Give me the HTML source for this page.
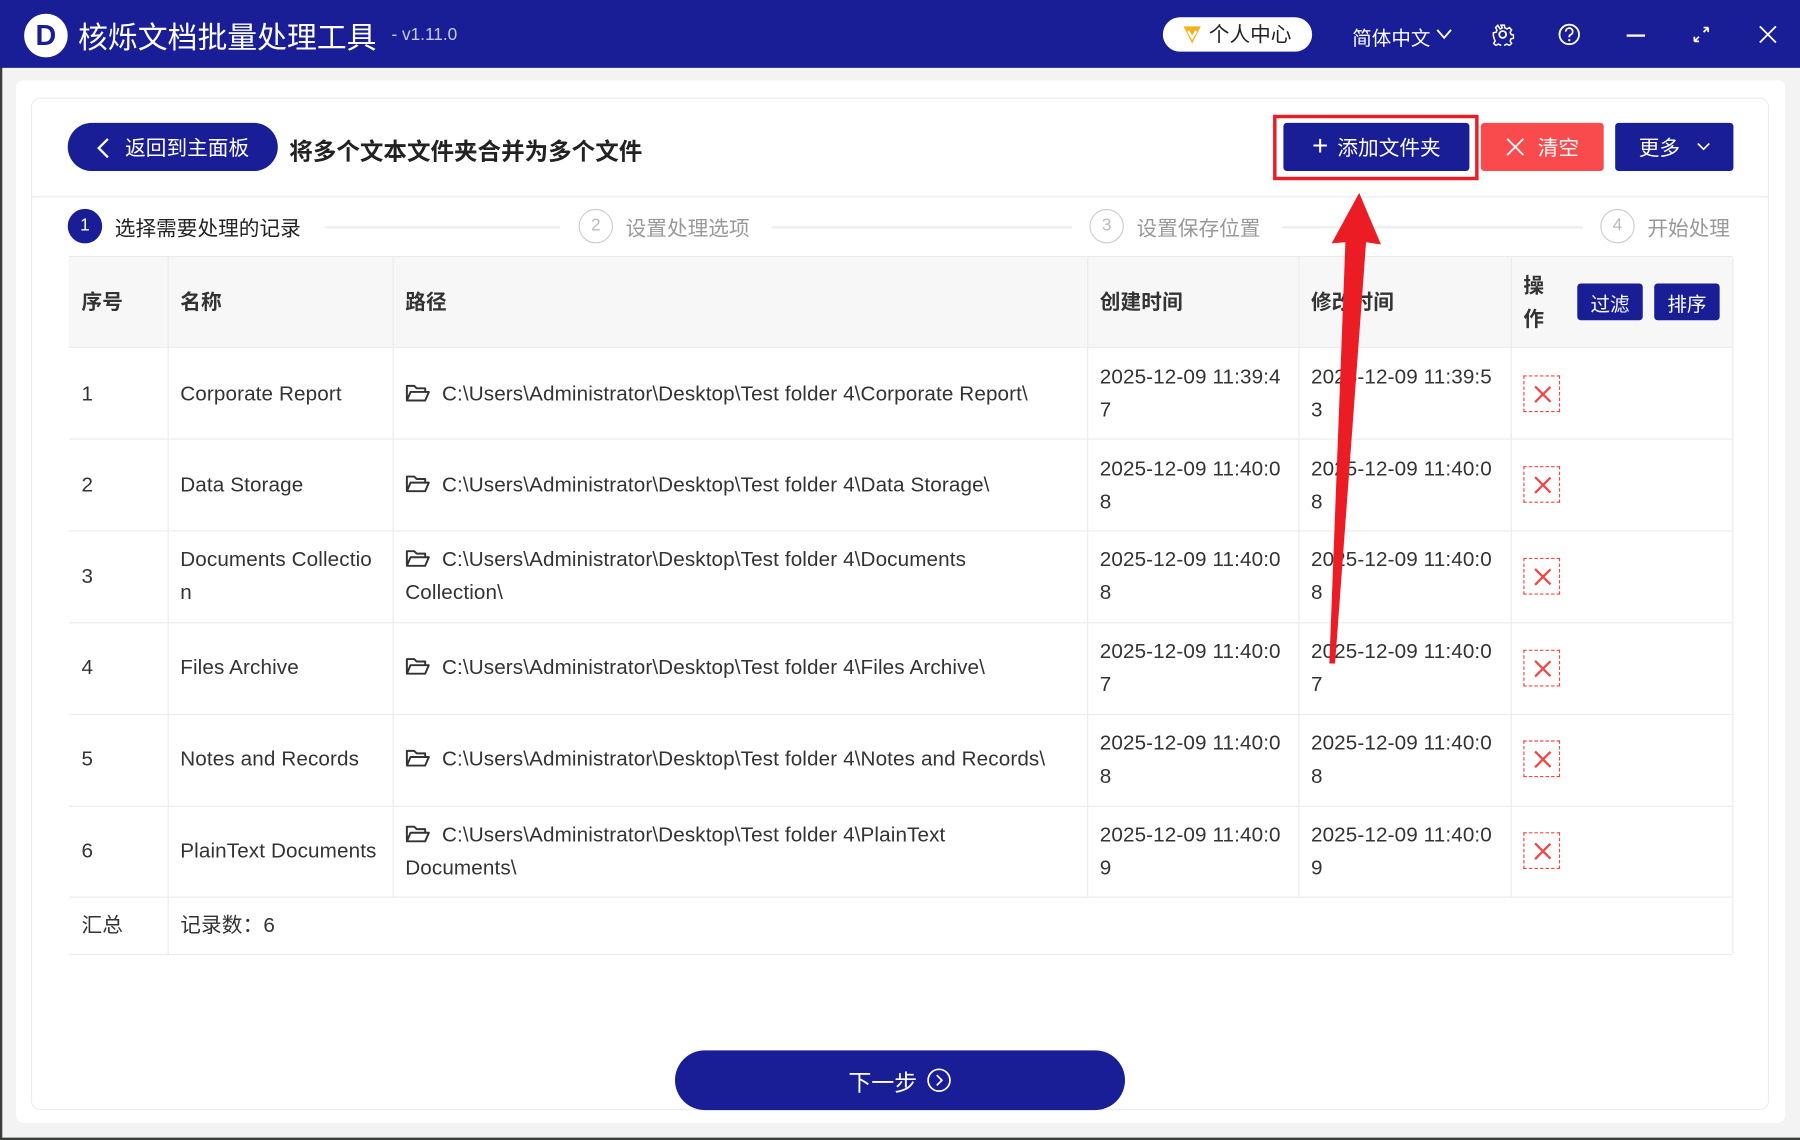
<!DOCTYPE html>
<html><head><meta charset="utf-8"><style>
*{box-sizing:border-box;margin:0;padding:0}
html,body{width:1800px;height:1140px;overflow:hidden;background:#3a3f3a}
#s{position:absolute;left:0;top:0;width:1568px;height:993px;transform:scale(1.14796);transform-origin:0 0;font-family:"Liberation Sans","Noto Sans CJK SC",sans-serif;color:#222}
.a{position:absolute}
#top{left:0;top:0;width:1568px;height:59px;background:#191e97;color:#fff}
#bg{left:2px;top:59px;width:1566px;height:932px;background:#f3f3f3}
#card{left:14px;top:70px;width:1541px;height:908px;background:#fff;border-radius:6px}
#inner{left:27px;top:85px;width:1514px;height:882px;border:1px solid #ececec;border-radius:8px;background:#fff}
.btn{position:absolute;background:#191e97;color:#fff;font-size:18px;display:flex;align-items:center;justify-content:center;border-radius:3px}
.cell{position:absolute;font-size:18px;color:#333;line-height:29px;white-space:nowrap;letter-spacing:0.1px}
.hl{position:absolute;left:60px;width:1449px;height:1px;background:#ebebeb}
.vl{position:absolute;width:1px;background:#ebebeb}
.del{position:absolute;left:1327px;width:32px;height:32px;border:1px dashed #f04848}
.del::before,.del::after{content:"";position:absolute;left:15px;top:6px;width:1.5px;height:19px;background:#f04848;transform:rotate(45deg)}
.del::after{transform:rotate(-45deg)}
.step{position:absolute;top:182px;width:30px;height:30px;border-radius:50%;border:1px solid #ccc;color:#bbb;font-size:15px;text-align:center;line-height:28px}
.st{position:absolute;top:185px;font-size:18px;color:#999}
.sl{position:absolute;top:197px;height:2px;background:#eee}
</style></head><body><div id="s">
<div class="a" id="bg"></div>
<div class="a" id="card"></div>
<div class="a" id="inner"></div>
<div class="a" id="top">
 <div class="a" style="left:21px;top:12px;width:38px;height:38px;border-radius:50%;background:#fff;color:#191e97;font-weight:bold;font-size:25px;text-align:center;line-height:38px">D</div>
 <div class="a" style="left:68px;top:13px;font-size:26px">核烁文档批量处理工具</div>
 <div class="a" style="left:341px;top:22px;font-size:15px;color:#c8cbe8">- v1.11.0</div>
 <div class="a" style="left:1013px;top:15px;width:130px;height:30px;border-radius:15px;background:#fff;color:#222;font-size:18px;line-height:30px;padding-left:40px">个人中心</div>
 <svg class="a" style="left:1029px;top:21px" width="19" height="18" viewBox="0 0 19 18"><path d="M2 2h15l-7.5 15z" fill="#f6b21a"/><path d="M6 6l3.5 6 3.5-6" stroke="#fff" stroke-width="2" fill="none"/></svg>
 <div class="a" style="left:1178px;top:19px;font-size:17px">简体中文</div>
 <svg class="a" style="left:1251px;top:25px" width="14" height="10"><path d="M1 1l6 7 6-7" stroke="#fff" stroke-width="1.6" fill="none"/></svg>
 <svg class="a" style="left:1299px;top:20px" width="20" height="20" viewBox="0 0 20 20"><circle cx="10" cy="10" r="3" stroke="#fff" stroke-width="1.6" fill="none"/><path d="M8.5 1.5h3l.5 2.5 2 1 2.2-1.3 2 2.1-1.3 2.2.8 2 2.3.5v3l-2.3.5-.8 2 1.3 2.2-2 2-2.2-1.3-2 .9-.5 2.4h-3l-.5-2.4-2-.9-2.2 1.3-2-2 1.3-2.2-.8-2L1.5 11.5v-3L4 8l.8-2-1.3-2.2 2-2.1L7.7 5l2-1z" stroke="#fff" stroke-width="1.4" fill="none" transform="scale(.95) translate(.5 .5)"/></svg>
 <svg class="a" style="left:1357px;top:20px" width="20" height="20"><circle cx="10" cy="10" r="8.5" stroke="#fff" stroke-width="1.6" fill="none"/><path d="M7 7.5a3 3 0 1 1 4 2.8c-1 .4-1 1.2-1 2.2" stroke="#fff" stroke-width="1.6" fill="none"/><circle cx="10" cy="15" r="1" fill="#fff"/></svg>
 <div class="a" style="left:1417px;top:30px;width:16px;height:2px;background:#fff"></div>
 <svg class="a" style="left:1474px;top:22px" width="16" height="16"><path d="M2 14l4-4M10 6l4-4M14 2h-4M14 2v4M2 14h4M2 14v-4" stroke="#fff" stroke-width="1.5" fill="none"/></svg>
 <svg class="a" style="left:1532px;top:22px" width="16" height="16"><path d="M1 1l14 14M15 1L1 15" stroke="#fff" stroke-width="1.6"/></svg>
</div>

<div class="btn" style="left:59px;top:107px;width:183px;height:42px;border-radius:21px;justify-content:flex-start;padding-left:50px">返回到主面板</div>
<svg class="a" style="left:84px;top:120px" width="12" height="18"><path d="M10 1L2 9l8 8" stroke="#fff" stroke-width="2" fill="none"/></svg>
<div class="a" style="left:252px;top:115px;font-size:20.5px;font-weight:bold;color:#222">将多个文本文件夹合并为多个文件</div>

<div class="a" style="left:1109px;top:100px;width:179px;height:57px;border:3px solid #ec1c24"></div>
<div class="btn" style="left:1118px;top:107px;width:162px;height:42px"><span style="font-size:24px;font-weight:300;margin-right:8px">+</span>添加文件夹</div>
<div class="btn" style="left:1290px;top:107px;width:107px;height:42px;background:#f94b4e"><svg style="margin-right:12px" width="16" height="16"><path d="M1 1l14 14M15 1L1 15" stroke="#fff" stroke-width="1.6"/></svg>清空</div>
<div class="btn" style="left:1407px;top:107px;width:103px;height:42px">更多<svg style="margin-left:14px" width="12" height="8"><path d="M1 1l5 5 5-5" stroke="#fff" stroke-width="1.4" fill="none"/></svg></div>

<div class="a" style="left:28px;top:171px;width:1512px;height:1px;background:#ececec"></div>
<div class="step" style="left:59px;background:#191e97;border-color:#191e97;color:#fff">1</div>
<div class="st" style="left:100px;color:#222">选择需要处理的记录</div>
<div class="sl" style="left:283px;width:205px"></div>
<div class="step" style="left:504px">2</div>
<div class="st" style="left:545px">设置处理选项</div>
<div class="sl" style="left:672px;width:262px"></div>
<div class="step" style="left:949px">3</div>
<div class="st" style="left:990px">设置保存位置</div>
<div class="sl" style="left:1117px;width:262px"></div>
<div class="step" style="left:1394px">4</div>
<div class="st" style="left:1435px">开始处理</div>

<div class="a" style="left:60px;top:224px;width:1449px;height:78px;background:#f7f7f7"></div>
<div class="hl" style="top:223px"></div>
<div class="hl" style="top:302px"></div><div class="hl" style="top:382px"></div><div class="hl" style="top:462px"></div><div class="hl" style="top:542px"></div><div class="hl" style="top:622px"></div><div class="hl" style="top:702px"></div><div class="hl" style="top:781px"></div><div class="hl" style="top:831px"></div>
<div class="vl" style="left:146px;top:224px;height:607px"></div>
<div class="vl" style="left:342px;top:224px;height:557px"></div>
<div class="vl" style="left:947px;top:224px;height:557px"></div>
<div class="vl" style="left:1131px;top:224px;height:557px"></div>
<div class="vl" style="left:1316px;top:224px;height:557px"></div>
<div class="vl" style="left:1509px;top:224px;height:607px"></div>

<div class="cell" style="left:71px;top:249px;font-weight:bold">序号</div>
<div class="cell" style="left:157px;top:249px;font-weight:bold">名称</div>
<div class="cell" style="left:353px;top:249px;font-weight:bold">路径</div>
<div class="cell" style="left:958px;top:249px;font-weight:bold">创建时间</div>
<div class="cell" style="left:1142px;top:249px;font-weight:bold">修改时间</div>
<div class="cell" style="left:1327px;top:235px;font-weight:bold">操<br>作</div>
<div class="btn" style="left:1374px;top:247px;width:57px;height:32px;font-size:17px">过滤</div>
<div class="btn" style="left:1441px;top:247px;width:57px;height:32px;font-size:17px">排序</div>

<svg width="0" height="0" style="position:absolute"><defs><symbol id="f" viewBox="0 0 20 16"><path d="M1 14V2h6l2 2h7v3M1 14l3-7h15l-3 7z" stroke="#333" stroke-width="1.6" fill="none" stroke-linejoin="round"/></symbol></defs></svg>

<div class="cell" style="left:71px;top:329px">1</div><div class="cell" style="left:157px;top:329px">Corporate Report</div>
<svg class="a" style="left:353px;top:334px" width="22" height="17"><use href="#f"/></svg><div class="cell" style="left:385px;top:329px">C:\Users\Administrator\Desktop\Test folder 4\Corporate Report\</div>
<div class="cell" style="left:958px;top:314px">2025-12-09 11:39:4<br>7</div><div class="cell" style="left:1142px;top:314px">2025-12-09 11:39:5<br>3</div><div class="del" style="top:327px"></div>

<div class="cell" style="left:71px;top:408px">2</div><div class="cell" style="left:157px;top:408px">Data Storage</div>
<svg class="a" style="left:353px;top:413px" width="22" height="17"><use href="#f"/></svg><div class="cell" style="left:385px;top:408px">C:\Users\Administrator\Desktop\Test folder 4\Data Storage\</div>
<div class="cell" style="left:958px;top:394px">2025-12-09 11:40:0<br>8</div><div class="cell" style="left:1142px;top:394px">2025-12-09 11:40:0<br>8</div><div class="del" style="top:406px"></div>

<div class="cell" style="left:71px;top:488px">3</div><div class="cell" style="left:157px;top:473px">Documents Collectio<br>n</div>
<svg class="a" style="left:353px;top:478px" width="22" height="17"><use href="#f"/></svg><div class="cell" style="left:385px;top:473px">C:\Users\Administrator\Desktop\Test folder 4\Documents</div><div class="cell" style="left:353px;top:502px">Collection\</div>
<div class="cell" style="left:958px;top:473px">2025-12-09 11:40:0<br>8</div><div class="cell" style="left:1142px;top:473px">2025-12-09 11:40:0<br>8</div><div class="del" style="top:486px"></div>

<div class="cell" style="left:71px;top:567px">4</div><div class="cell" style="left:157px;top:567px">Files Archive</div>
<svg class="a" style="left:353px;top:572px" width="22" height="17"><use href="#f"/></svg><div class="cell" style="left:385px;top:567px">C:\Users\Administrator\Desktop\Test folder 4\Files Archive\</div>
<div class="cell" style="left:958px;top:553px">2025-12-09 11:40:0<br>7</div><div class="cell" style="left:1142px;top:553px">2025-12-09 11:40:0<br>7</div><div class="del" style="top:566px"></div>

<div class="cell" style="left:71px;top:647px">5</div><div class="cell" style="left:157px;top:647px">Notes and Records</div>
<svg class="a" style="left:353px;top:652px" width="22" height="17"><use href="#f"/></svg><div class="cell" style="left:385px;top:647px">C:\Users\Administrator\Desktop\Test folder 4\Notes and Records\</div>
<div class="cell" style="left:958px;top:633px">2025-12-09 11:40:0<br>8</div><div class="cell" style="left:1142px;top:633px">2025-12-09 11:40:0<br>8</div><div class="del" style="top:645px"></div>

<div class="cell" style="left:71px;top:727px">6</div><div class="cell" style="left:157px;top:727px">PlainText Documents</div>
<svg class="a" style="left:353px;top:718px" width="22" height="17"><use href="#f"/></svg><div class="cell" style="left:385px;top:713px">C:\Users\Administrator\Desktop\Test folder 4\PlainText</div><div class="cell" style="left:353px;top:742px">Documents\</div>
<div class="cell" style="left:958px;top:713px">2025-12-09 11:40:0<br>9</div><div class="cell" style="left:1142px;top:713px">2025-12-09 11:40:0<br>9</div><div class="del" style="top:725px"></div>

<div class="cell" style="left:71px;top:792px">汇总</div><div class="cell" style="left:157px;top:792px">记录数：6</div>

<div class="btn" style="left:588px;top:915px;width:392px;height:52px;border-radius:26px;font-size:20px">下一步<svg style="margin-left:8px" width="22" height="22"><circle cx="11" cy="11" r="9.5" stroke="#fff" stroke-width="1.5" fill="none"/><path d="M9 6.5l4.5 4.5L9 15.5" stroke="#fff" stroke-width="1.5" fill="none"/></svg></div>

<svg class="a" style="left:0;top:0" width="1568" height="993"><path d="M1184 168L1203 213L1190 211L1163 578L1158 578L1172 211L1160 212Z" fill="#ec1c24"/></svg>
</div></body></html>
